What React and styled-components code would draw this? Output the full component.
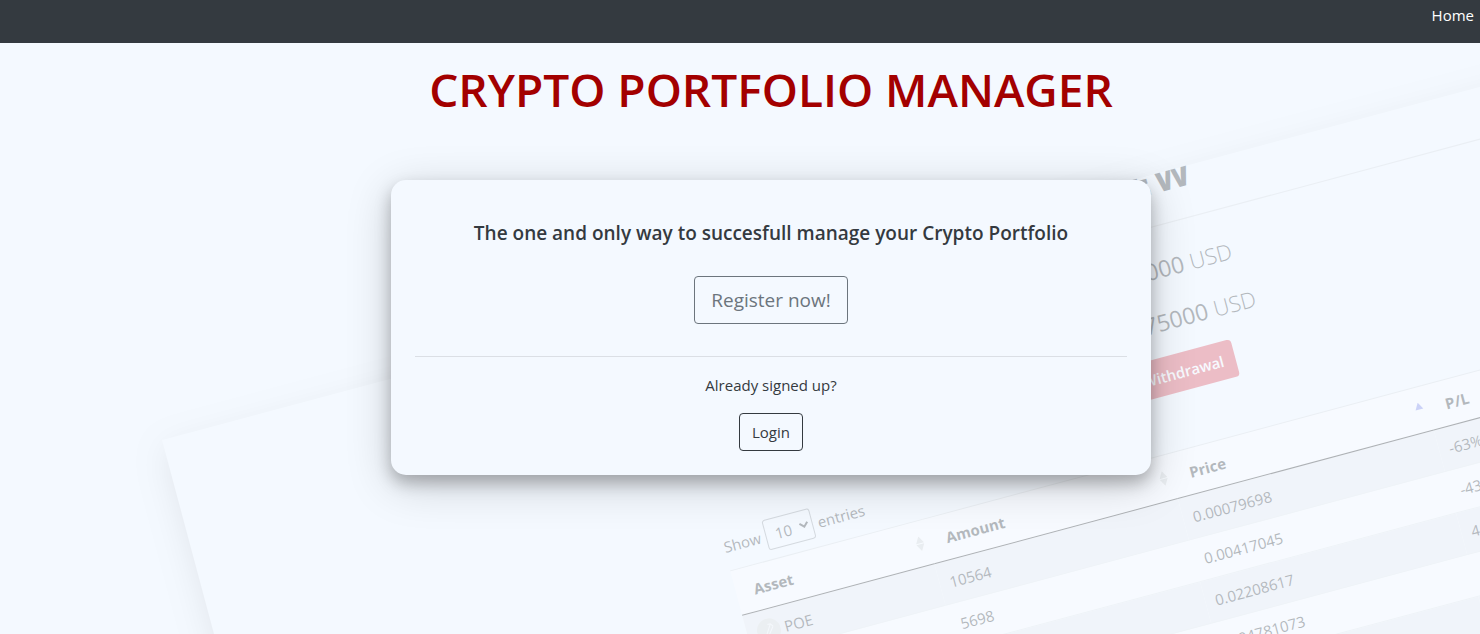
import React from "react";
import styled, { createGlobalStyle } from "styled-components";

const GlobalStyle = createGlobalStyle`
  *, *::before, *::after { box-sizing: border-box; }
  body {
    margin: 0;
    background: #f4f9ff;
    color: #343a40;
    font-family: "Open Sans", "Noto Sans", sans-serif;
    font-size: 15px;
    line-height: 24px;
  }
`;

const Page = styled.div`
  position: relative;
  min-height: 100vh;
  overflow: hidden;
`;

const NavBar = styled.nav`
  position: relative;
  z-index: 1;
  display: flex;
  justify-content: flex-end;
  padding: 3px 6px 16px;
  background: #343a40;
`;

const NavLink = styled.a`
  color: #fff;
  text-decoration: none;
`;

const Main = styled.main`
  position: relative;
  display: flex;
  flex-direction: column;
  align-items: center;
  padding: 17px 0 48px 62px;
`;

const Title = styled.h1`
  margin: 0 0 62px;
  color: #a30000;
  font-size: 46px;
  font-weight: 600;
  line-height: 58px;
  text-transform: uppercase;
`;

const Card = styled.section`
  width: 760px;
  max-width: 100%;
  padding: 40px 24px 24px;
  border-radius: 15px;
  background: #f4f9ff;
  text-align: center;
  box-shadow: 0 8px 16px rgba(0, 0, 0, 0.25), 0 10px 46px rgba(0, 0, 0, 0.18);
`;

const Lead = styled.h2`
  margin: 0 0 30px;
  font-size: 19px;
  font-weight: 600;
  line-height: 26px;
`;

const Button = styled.button`
  padding: ${(p) => (p.$large ? "8px 16px" : "6px 12px")};
  border: 1px solid ${(p) => (p.$large ? "#6c757d" : "#343a40")};
  border-radius: 4px;
  background: transparent;
  color: ${(p) => (p.$large ? "#6c757d" : "#343a40")};
  font-family: inherit;
  font-size: ${(p) => (p.$large ? "19px" : "15px")};
  line-height: ${(p) => (p.$large ? "30px" : "24px")};
`;

const Divider = styled.hr`
  margin: 32px 0 16px;
  border: 0;
  border-top: 1px solid #dbdfe5;
`;

const Note = styled.p`
  margin: 0 0 16px;
`;

const Backdrop = styled.div`
  position: absolute;
  inset: 0;
  overflow: hidden;
`;

const Sheet = styled.div`
  position: absolute;
  top: 440px;
  left: 162px;
  width: 1600px;
  height: 900px;
  transform: rotate(-15deg);
  transform-origin: 0 0;
  box-shadow: 0 12px 32px rgba(0, 0, 0, 0.25);
  background: #f5faff;
  opacity: 0.3;
  color: #212529;
`;

const SheetHead = styled.header`
  display: flex;
  align-items: flex-end;
  justify-content: flex-end;
  gap: 4px;
  height: 51px;
  margin-left: 500px;
  padding: 0 538px 22px 0;
  overflow: hidden;
  border-bottom: 1px solid #d5d9dd;
  font-size: 38px;
  font-weight: 700;
  line-height: 48px;
`;

const Account = styled.div`
  display: flex;
  flex-direction: column;
  align-items: flex-end;
  width: 1093px;
  height: 182px;
  padding-top: 24px;
`;

const Balance = styled.div`
  margin-bottom: 16px;
  padding-right: ${(p) => p.$inset || 0};
  font-size: 23px;
  line-height: 36px;
`;

const Currency = styled.span`
  font-size: 22px;
  font-weight: 300;
`;

const Withdraw = styled.button`
  margin: 0 35px 0 0;
  padding: 7px 12px;
  border: 0;
  border-radius: 4px;
  background: #dc3545;
  color: #fff;
  font: 600 15px/24px "Open Sans", sans-serif;
`;

const TableArea = styled.div`
  padding-left: 515px;
`;

const Length = styled.label`
  display: flex;
  align-items: center;
  gap: 5px;
  height: 31px;
  margin-bottom: 9px;
`;

const LengthSelect = styled.select`
  width: 49px;
  height: 31px;
  padding: 0 0 0 5px;
  border: 1px solid #8d9399;
  border-radius: 3px;
  background: transparent;
  color: inherit;
  font: inherit;
`;

const Table = styled.table`
  width: 1060px;
  table-layout: fixed;
  border-collapse: collapse;
  background: #fff;
`;

const HeadCell = styled.th`
  width: ${(p) => p.$width};
  height: 46px;
  padding: 0 4px 0 18px;
  border-top: 1px solid #d5d9dd;
  border-bottom: 1px solid #111;
  font-weight: 700;
  text-align: left;
`;

const HeadContent = styled.div`
  display: flex;
  align-items: center;
  justify-content: space-between;
`;

const Row = styled.tr`
  height: 43px;
  background: ${(p) => (p.$striped ? "#e9ebef" : "#fff")};
  border-bottom: 1px solid #e4e7ea;
`;

const Cell = styled.td`
  padding: 0 10px;
`;

const Asset = styled.span`
  display: flex;
  align-items: center;
  gap: 4px;
`;

const columns = [
  { name: "Asset", width: "199px", sort: "both" },
  { name: "Amount", width: "252px", sort: "both" },
  { name: "Price", width: "265px", sort: "up" },
  { name: "P/L", width: "344px" },
];

const rows = [
  ["POE", "10564", "0.00079698", "-63%"],
  ["", "5698", "0.00417045", "-43%"],
  ["", "", "0.02208617", "41%"],
  ["", "", "0.04781073", ""],
  ["", "", "", ""],
  ["", "", "", ""],
];

function SortIcon({ kind }) {
  return (
    <svg width="9" height="15" viewBox="0 0 9 15" aria-hidden="true">
      <path d="M0.500 7L4.500 0L8.500 7Z" fill={kind === "up" ? "#7079e8" : "#d2d2d2"} />
      {kind === "both" && <path d="M0.500 8L4.500 15L8.500 8Z" fill="#d2d2d2" />}
    </svg>
  );
}

function CoinIcon() {
  return (
    <svg width="24" height="24" viewBox="0 0 24 24" aria-hidden="true">
      <circle cx="12" cy="12" r="12" fill="#d9d9d6" />
      <path d="M8 17L15 6M10 18L17 9M12 6L15 6L17 9" fill="none" stroke="#f7f7f7" strokeWidth="1" />
    </svg>
  );
}

function PortfolioSheet() {
  return (
    <Backdrop aria-hidden="true">
      <Sheet>
        <SheetHead>
          <span>E</span>
          <span>W</span>
        </SheetHead>
        <Account>
          <Balance $inset="11px">50000 <Currency>USD</Currency></Balance>
          <Balance>75000 <Currency>USD</Currency></Balance>
          <Withdraw tabIndex={-1}>Withdrawal</Withdraw>
        </Account>
        <TableArea>
          <Length>
            Show
            <LengthSelect tabIndex={-1}><option>10</option></LengthSelect>
            entries
          </Length>
          <Table>
            <thead>
              <tr>
                {columns.map((c) => (
                  <HeadCell key={c.name} $width={c.width}>
                    <HeadContent>
                      {c.name}
                      {c.sort && <SortIcon kind={c.sort} />}
                    </HeadContent>
                  </HeadCell>
                ))}
              </tr>
            </thead>
            <tbody>
              {rows.map(([asset, amount, price, change], i) => (
                <Row key={i} $striped={i % 2 === 0}>
                  <Cell>{asset && <Asset><CoinIcon />{asset}</Asset>}</Cell>
                  <Cell>{amount}</Cell>
                  <Cell>{price}</Cell>
                  <Cell>{change}</Cell>
                </Row>
              ))}
            </tbody>
          </Table>
        </TableArea>
      </Sheet>
    </Backdrop>
  );
}

export default function App() {
  return (
    <Page>
      <GlobalStyle />
      <PortfolioSheet />
      <NavBar>
        <NavLink href="#home">Home</NavLink>
      </NavBar>
      <Main>
        <Title>Crypto Portfolio Manager</Title>
        <Card>
          <Lead>The one and only way to succesfull manage your Crypto Portfolio</Lead>
          <Button $large>Register now!</Button>
          <Divider />
          <Note>Already signed up?</Note>
          <Button>Login</Button>
        </Card>
      </Main>
    </Page>
  );
}
